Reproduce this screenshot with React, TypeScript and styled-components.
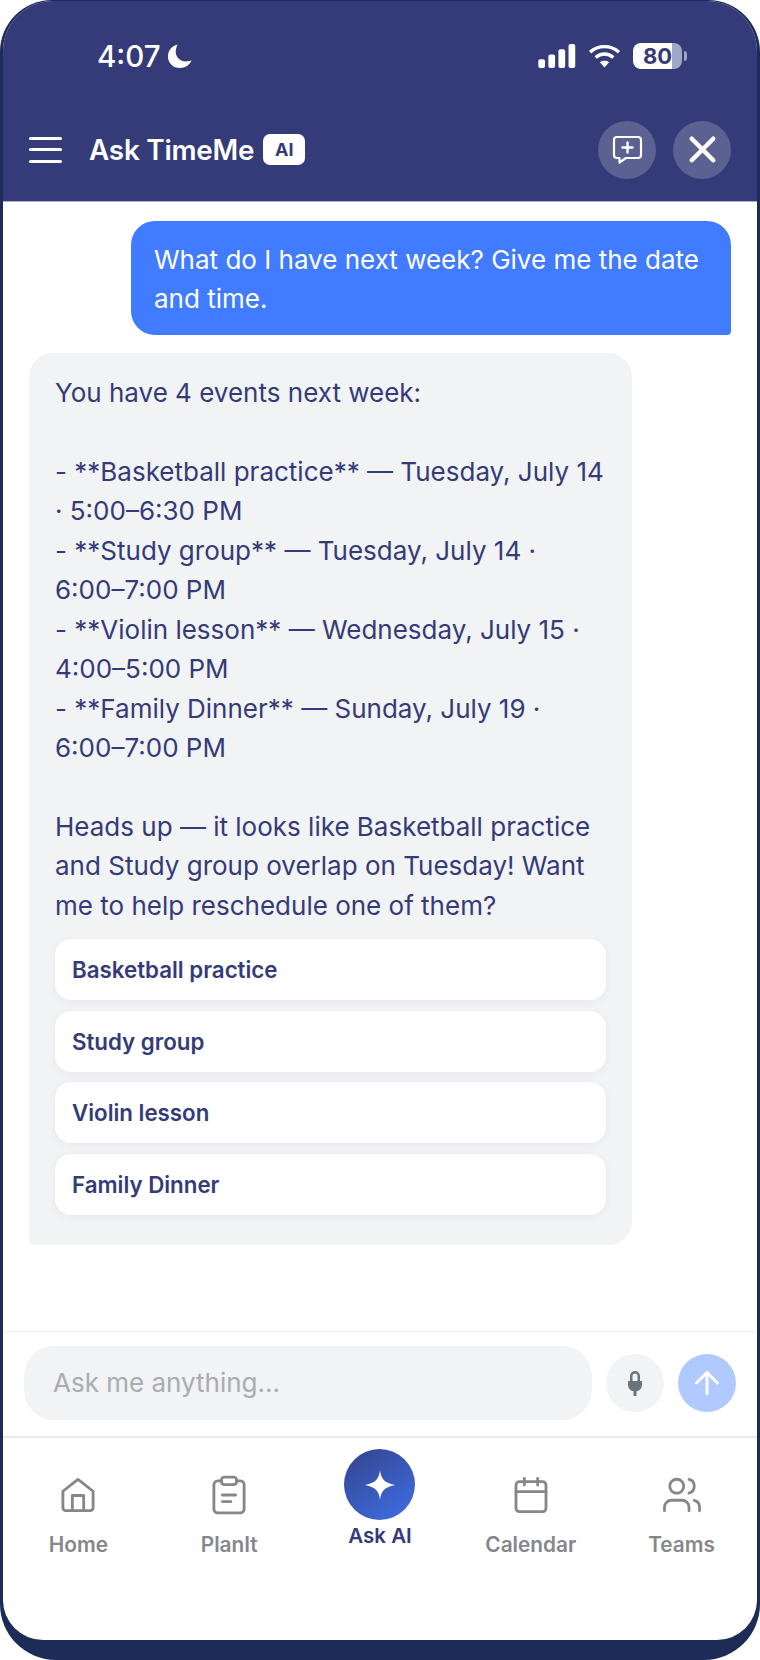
import React from "react";
import styled, { createGlobalStyle } from "styled-components";
import { ArrowUp, Calendar, Users, X } from "lucide-react";

const Global = createGlobalStyle`
  html, body { margin: 0; padding: 0; background: #fff; }
  * { box-sizing: border-box; }
  body { font-family: Inter, "Liberation Sans", sans-serif; }
`;

const Frame = styled.div`
  width: 760px;
  height: 1660px;
  padding: 1px 3px 20px;
  background: #1c2c57;
  border-radius: 52px 52px 56px 56px;
  overflow: hidden;
`;
const Screen = styled.div`
  height: 100%;
  background: #fff;
  border-radius: 50px 50px 40px 40px;
  overflow: hidden;
  display: flex;
  flex-direction: column;
`;
const Header = styled.header`
  height: 201px;
  flex: none;
  background: #343b78;
  border-bottom: 1px solid #a9b2dc;
  color: #fff;
  display: flex;
  flex-direction: column;
`;
const StatusBar = styled.div`
  height: 111px;
  padding: 37px 75px 0 94px;
  display: flex;
  justify-content: space-between;
  align-items: flex-start;
`;
const TimeGroup = styled.div`
  display: flex;
  align-items: center;
  gap: 6px;
  font-size: 29.500px;
  font-weight: 500;
  line-height: 36px;
`;
const StatusIcons = styled.div`
  display: flex;
  align-items: center;
  gap: 12px;
  height: 36px;
`;
const Battery = styled.div`
  position: relative;
  width: 49px;
  height: 26px;
  border-radius: 8px;
  background: linear-gradient(90deg, #fff 0 79%, #a1a5c6 79% 100%);
  color: #343b78;
  font-size: 22px;
  font-weight: 700;
  line-height: 26px;
  text-align: center;
  &::after {
    content: "";
    position: absolute;
    right: -5px;
    top: 8px;
    width: 3px;
    height: 10px;
    border-radius: 0 3px 3px 0;
    background: #a1a5c6;
  }
`;
const TopRow = styled.div`
  flex: 1;
  padding: 0 26px 14px 26px;
  display: flex;
  align-items: center;
`;
const Burger = styled.div`
  width: 33px;
  height: 26px;
  display: flex;
  flex-direction: column;
  justify-content: space-between;
  margin-right: 27px;
  span {
    display: block;
    height: 3px;
    border-radius: 2px;
    background: #fff;
  }
`;
const Title = styled.h1`
  margin: 0;
  font-size: 27.800px;
  font-weight: 600;
  letter-spacing: -0.2px;
`;
const AiTag = styled.span`
  margin-left: 9px;
  width: 42px;
  height: 31px;
  border-radius: 7px;
  background: #fff;
  color: #343b78;
  font-size: 18px;
  font-weight: 700;
  display: flex;
  align-items: center;
  justify-content: center;
`;
const HeaderActions = styled.div`
  margin-left: auto;
  display: flex;
  gap: 17px;
`;
const RoundButton = styled.div`
  width: 58px;
  height: 58px;
  border-radius: 50%;
  background: #5b6190;
  display: flex;
  align-items: center;
  justify-content: center;
`;
const Chat = styled.main`
  flex: 1;
  padding: 19px 26px 0;
  display: flex;
  flex-direction: column;
  gap: 18px;
`;
const UserBubble = styled.div`
  align-self: flex-end;
  width: 600px;
  padding: 19px 23px 16px;
  background: #417bff;
  color: #fff;
  border-radius: 24px 24px 4px 24px;
  font-size: 26px;
  line-height: 39.45px;
`;
const BotBubble = styled.div`
  width: 603px;
  padding: 20px 26px 30px;
  background: #f2f3f5;
  color: #343b78;
  border-radius: 24px 24px 24px 4px;
  font-size: 26px;
  line-height: 39.45px;
`;
const BotText = styled.div`
  white-space: pre-wrap;
`;
const Options = styled.div`
  margin-top: 14px;
  display: flex;
  flex-direction: column;
  gap: 10.500px;
`;
const Option = styled.div`
  height: 61px;
  padding: 0 17px;
  display: flex;
  align-items: center;
  background: #fff;
  border-radius: 16px;
  box-shadow: 0 2px 8px rgba(30, 40, 80, 0.05);
  font-size: 22.300px;
  font-weight: 600;
  color: #343b78;
`;
const Composer = styled.div`
  flex: none;
  height: 107px;
  padding: 14px 21px 0;
  border-top: 1px solid #eceef0;
  border-bottom: 2px solid #e8e9eb;
  display: flex;
  gap: 14px;
`;
const InputBox = styled.div`
  flex: 1;
  height: 74px;
  padding: 0 29px 2px;
  border-radius: 30px;
  background: #f2f3f5;
  color: #a9acb2;
  font-size: 26px;
  display: flex;
  align-items: center;
`;
const ComposerButton = styled.div<{ $bg: string }>`
  width: 58px;
  height: 58px;
  margin-top: 8px;
  border-radius: 50%;
  background: ${(p) => p.$bg};
  display: flex;
  align-items: center;
  justify-content: center;
`;
const Nav = styled.nav`
  flex: none;
  height: 202px;
  display: grid;
  grid-template-columns: repeat(5, 1fr);
`;
const NavItem = styled.div<{ $active?: boolean }>`
  display: flex;
  flex-direction: column;
  align-items: center;
  padding-top: ${(p) => (p.$active ? "11px" : "34px")};
  gap: ${(p) => (p.$active ? "3px" : "14px")};
  font-size: ${(p) => (p.$active ? "20.500px" : "20.800px")};
  font-weight: 600;
  line-height: 26px;
  color: ${(p) => (p.$active ? "#343b78" : "#85878b")};
`;
const NavIcon = styled.div`
  height: 46px;
  display: flex;
  align-items: center;
  justify-content: center;
`;
const AskCircle = styled.div`
  width: 71px;
  height: 71px;
  border-radius: 50%;
  background: linear-gradient(145deg, #34438d, #3f6fe6);
  display: flex;
  align-items: center;
  justify-content: center;
`;

const Moon = () => (
  <svg width="26" height="26" viewBox="0 0 27 27" fill="#fff">
    <path d="M11 1.500C4.500 3 1 8 1 14c0 7 5.500 12 12.500 12 5.500 0 10-3 12-8-1.500.8-3.500 1.200-5.500 1.200-7.500 0-12.500-6-10.500-13.200.2-1.500.8-3.300 1.500-4.500z" />
  </svg>
);
const Signal = () => (
  <svg width="38" height="24" viewBox="0 0 39 25" fill="#fff">
    <rect x="0" y="16" width="7" height="9" rx="2" />
    <rect x="10.500" y="11" width="7" height="14" rx="2" />
    <rect x="21" y="5.500" width="7" height="19.500" rx="2" />
    <rect x="31.500" y="0" width="7" height="25" rx="2" />
  </svg>
);
const Wifi = () => (
  <svg width="33" height="24" viewBox="0 0 34 25" fill="none" stroke="#fff" strokeWidth="3.600">
    <path d="M2 8.500C10.500 .8 23.500 .8 32 8.500" />
    <path d="M7.800 14c5.500-4.800 12.900-4.800 18.400 0" />
    <path d="M17 24.500l-4.800-5.500c2.800-2 6.800-2 9.600 0z" fill="#fff" stroke="none" />
  </svg>
);
const NewChat = () => (
  <svg width="31" height="29" viewBox="0 0 31 29" fill="none" stroke="#fff" strokeWidth="2.200" strokeLinejoin="round" strokeLinecap="round">
    <path d="M5 2h21a3 3 0 0 1 3 3v15a3 3 0 0 1-3 3H14l-6.500 4.500V23H5a3 3 0 0 1-3-3V5a3 3 0 0 1 3-3z" />
    <path d="M15.500 7.500v10M10.500 12.500h10" strokeWidth="2.400" />
  </svg>
);
const HomeIcon = () => (
  <svg width="34" height="37" viewBox="0 0 36 38" fill="none" stroke="#85878b" strokeWidth="3" strokeLinejoin="round" strokeLinecap="round">
    <path d="M2 14.500 18 2l16 12.500V32a3 3 0 0 1-3 3H5a3 3 0 0 1-3-3z" />
    <path d="M12 35V19h12v16" />
  </svg>
);
const ClipboardIcon = () => (
  <svg width="34" height="40" viewBox="0 0 36 42" fill="none" stroke="#85878b" strokeWidth="3" strokeLinejoin="round" strokeLinecap="round">
    <path d="M10 6H6a4 4 0 0 0-4 4v26a4 4 0 0 0 4 4h24a4 4 0 0 0 4-4V10a4 4 0 0 0-4-4h-4" />
    <rect x="10" y="2" width="16" height="8" rx="3" />
    <path d="M11 21h14M11 28h9" />
  </svg>
);
const Sparkle = () => (
  <svg width="30" height="30" viewBox="0 0 30 30" fill="#fff">
    <path d="M15 0c1 8.500 3.500 12.500 15 15-11.500 2.500-14 6.500-15 15-1-8.500-3.500-12.500-15-15 11.500-2.500 14-6.500 15-15z" />
  </svg>
);
const MicIcon = () => (
  <svg width="16" height="26" viewBox="0 0 16 26" fill="#6b7280">
    <path d="M8 1a5 5 0 0 0-5 5v7h2.500V6a2.500 2.500 0 0 1 5 0v7H13V6a5 5 0 0 0-5-5z" />
    <path d="M1 11h14v3.500a7 7 0 0 1-5.500 6.800V26h-3v-4.700A7 7 0 0 1 1 14.500z" />
  </svg>
);

const botText = `You have 4 events next week:

- **Basketball practice** — Tuesday, July 14
· 5:00–6:30 PM
- **Study group** — Tuesday, July 14 ·
6:00–7:00 PM
- **Violin lesson** — Wednesday, July 15 ·
4:00–5:00 PM
- **Family Dinner** — Sunday, July 19 ·
6:00–7:00 PM

Heads up — it looks like Basketball practice
and Study group overlap on Tuesday! Want
me to help reschedule one of them?`;

const options = ["Basketball practice", "Study group", "Violin lesson", "Family Dinner"];

export default function App() {
  return (
    <>
      <Global />
      <Frame>
        <Screen>
          <Header>
            <StatusBar>
              <TimeGroup>
                4:07
                <Moon />
              </TimeGroup>
              <StatusIcons>
                <Signal />
                <Wifi />
                <Battery>80</Battery>
              </StatusIcons>
            </StatusBar>
            <TopRow>
              <Burger>
                <span />
                <span />
                <span />
              </Burger>
              <Title>Ask TimeMe</Title>
              <AiTag>AI</AiTag>
              <HeaderActions>
                <RoundButton>
                  <NewChat />
                </RoundButton>
                <RoundButton>
                  <X size={43} color="#fff" strokeWidth={2.5} />
                </RoundButton>
              </HeaderActions>
            </TopRow>
          </Header>
          <Chat>
            <UserBubble>What do I have next week? Give me the date and time.</UserBubble>
            <BotBubble>
              <BotText>{botText}</BotText>
              <Options>
                {options.map((o) => (
                  <Option key={o}>{o}</Option>
                ))}
              </Options>
            </BotBubble>
          </Chat>
          <Composer>
            <InputBox>Ask me anything...</InputBox>
            <ComposerButton $bg="#f2f3f5">
              <MicIcon />
            </ComposerButton>
            <ComposerButton $bg="#b0c9ff">
              <ArrowUp size={36} color="#fff" strokeWidth={2} />
            </ComposerButton>
          </Composer>
          <Nav>
            <NavItem>
              <NavIcon>
                <HomeIcon />
              </NavIcon>
              Home
            </NavItem>
            <NavItem>
              <NavIcon>
                <ClipboardIcon />
              </NavIcon>
              PlanIt
            </NavItem>
            <NavItem $active>
              <AskCircle>
                <Sparkle />
              </AskCircle>
              Ask AI
            </NavItem>
            <NavItem>
              <NavIcon>
                <Calendar size={40} color="#85878b" strokeWidth={1.7} />
              </NavIcon>
              Calendar
            </NavItem>
            <NavItem>
              <NavIcon>
                <Users size={42} color="#85878b" strokeWidth={1.6} />
              </NavIcon>
              Teams
            </NavItem>
          </Nav>
        </Screen>
      </Frame>
    </>
  );
}
